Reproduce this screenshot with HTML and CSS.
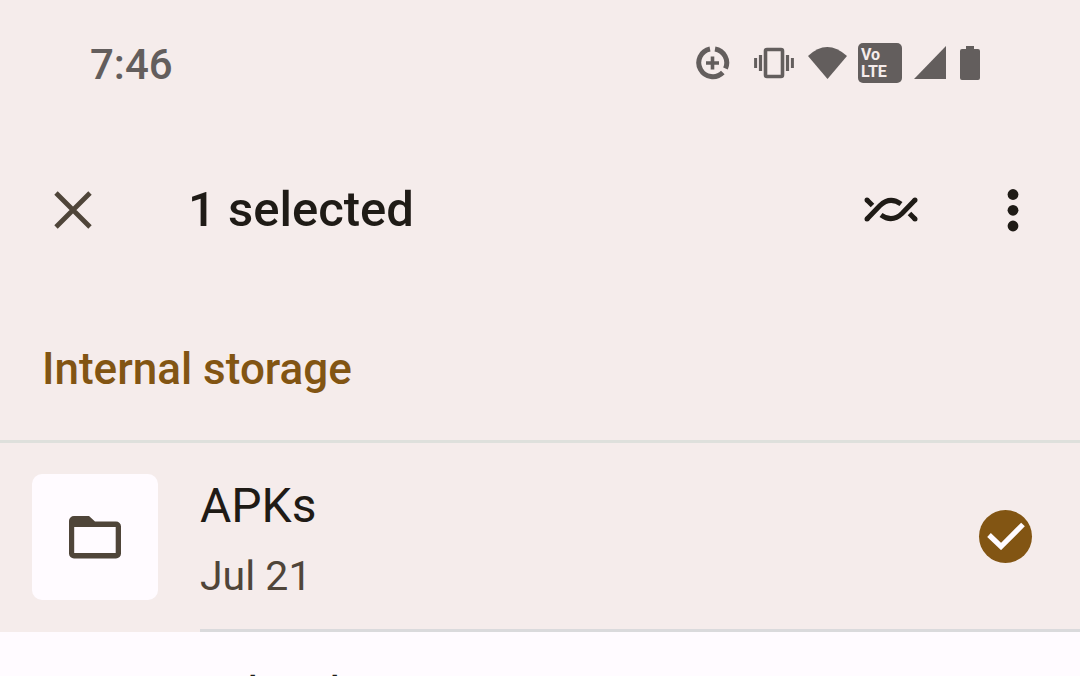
FILE: index.html
```html
<!DOCTYPE html>
<html lang="en">
<head>
<meta charset="utf-8">
<meta name="viewport" content="width=device-width, initial-scale=1">
<title>Files</title>
<link rel="stylesheet" href="styles.css">
</head>
<body>
<div class="screen">
  <div class="status-bar">
    <time class="clock">7:46</time>
    <div class="status-icons">
      <svg width="34" height="34" viewBox="0 0 34 34" fill="none" stroke="currentColor" aria-hidden="true">
        <path d="M19 3A14 14 0 0 1 29.500 22.500" stroke-width="5"/>
        <path d="M14 3A14 14 0 1 0 26.800 26.500" stroke-width="5"/>
        <path d="M16.500 10.500v13M10 17h13" stroke-width="3.600"/>
      </svg>
      <svg width="40" height="32" viewBox="0 0 40 32" fill="none" stroke="currentColor" aria-hidden="true">
        <rect x="11.500" y="2.500" width="17" height="27" rx="1.500" stroke-width="3.600"/>
        <path d="M6.500 8v16M33.500 8v16" stroke-width="3.200"/>
        <path d="M1.600 11v10M38.400 11v10" stroke-width="3"/>
      </svg>
      <svg width="40" height="34" viewBox="0 0 40 34" fill="currentColor" aria-hidden="true"><path d="M0 10Q19-8 39 10L19.500 33Z"/></svg>
      <span class="volte"><span>Vo</span><span>LTE</span></span>
      <svg width="34" height="34" viewBox="0 0 34 34" fill="currentColor" aria-hidden="true"><path d="M32 0v33H0Z"/></svg>
      <svg width="20" height="34" viewBox="0 0 20 34" fill="currentColor" aria-hidden="true"><path d="M6 0h8v3h4a2 2 0 0 1 2 2v27a2 2 0 0 1-2 2H2a2 2 0 0 1-2-2V5a2 2 0 0 1 2-2h4Z"/></svg>
    </div>
  </div>

  <header class="toolbar">
    <button class="icon-button close" type="button" aria-label="Clear selection">
      <svg width="40" height="40" viewBox="0 0 40 40" fill="none" stroke="currentColor" stroke-width="4.800" aria-hidden="true"><path d="M3 3l34 34M37 3L3 37"/></svg>
    </button>
    <h1 class="title">1 selected</h1>
    <div class="actions">
      <button class="icon-button" type="button" aria-label="Nearby Share">
        <svg width="54" height="26" viewBox="0 0 54 26" fill="none" stroke="currentColor" stroke-width="5" aria-hidden="true">
          <path d="M3 22L16 8.500Q26-1 37 7" />
          <path d="M51 3L38 16.500Q28 26 17 18"/>
          <path d="M3 3l5.500 5.500M45.500 16.500L51 22"/>
          <g fill="currentColor" stroke="none"><circle cx="3" cy="3" r="2.500"/><circle cx="3" cy="22" r="2.500"/><circle cx="51" cy="3" r="2.500"/><circle cx="51" cy="22" r="2.500"/></g>
        </svg>
      </button>
      <button class="icon-button" type="button" aria-label="More options">
        <svg width="12" height="44" viewBox="0 0 12 44" fill="currentColor" aria-hidden="true"><circle cx="6" cy="6.500" r="5.400"/><circle cx="6" cy="22.300" r="5.400"/><circle cx="6" cy="38" r="5.400"/></svg>
      </button>
    </div>
  </header>

  <nav class="breadcrumb" aria-label="Location"><a href="#">Internal storage</a></nav>

  <main class="file-list">
    <label class="file selected">
      <span class="thumb">
        <svg width="54" height="44" viewBox="0 0 54 44" fill="currentColor" fill-rule="evenodd" aria-hidden="true"><path d="M6 1h15l6 5.500h21a5 5 0 0 1 5 5v27a5 5 0 0 1-5 5H6a5 5 0 0 1-5-5V6a5 5 0 0 1 5-5ZM6.200 12v26h41.500V12Z"/></svg>
      </span>
      <span class="details">
        <span class="text"><span class="name">APKs</span><span class="date">Jul 21</span></span>
        <span class="check">
          <input type="checkbox" checked>
          <svg width="38" height="28" viewBox="0 0 38 28" fill="none" stroke="currentColor" stroke-width="5.200" aria-hidden="true"><path d="M2 13L14 24.500L36 2.500"/></svg>
        </span>
      </span>
    </label>
    <label class="file">
      <span class="thumb"></span>
      <span class="details"><span class="text"><span class="name">Adroid</span></span></span>
    </label>
  </main>
</div>
</body>
</html>
```
FILE: styles.css
```css
* { box-sizing: border-box; }

body {
  margin: 0;
  background: #fffbff;
  color: #1f1b16;
  font-family: Roboto, "Noto Sans", sans-serif;
}

.screen {
  height: 100vh;
  overflow: hidden;
  background: #f5eceb;
}

.status-bar {
  display: flex;
  align-items: center;
  justify-content: space-between;
  height: 126px;
  padding: 0 100px 0 90px;
  color: #635e5d;
}

.clock {
  padding-top: 3px;
  font-size: 42px;
  font-weight: 500;
  line-height: 48px;
}

.status-icons {
  display: flex;
  align-items: center;
}

.status-icons svg:nth-child(1) { margin-right: 24px; }
.status-icons svg:nth-child(2) { margin-right: 14px; }
.status-icons svg:nth-child(3) { margin-right: 10px; }

.volte {
  display: flex;
  flex-direction: column;
  justify-content: center;
  width: 44px;
  height: 40px;
  margin-right: 12px;
  padding: 0 3px;
  border-radius: 5px;
  background: #635e5d;
  color: #f5eceb;
  font-size: 16px;
  font-weight: 700;
  line-height: 17px;
}

.status-icons svg:nth-child(5) { margin-right: 12px; }

.toolbar {
  display: flex;
  align-items: center;
  height: 168px;
  padding: 0 30px 0 36px;
}

.icon-button {
  display: flex;
  align-items: center;
  justify-content: center;
  width: 74px;
  height: 74px;
  padding: 0;
  border: 0;
  background: none;
  color: inherit;
}

.close { color: #4f4539; }

.title {
  flex: 1;
  margin: 0;
  padding-left: 78px;
  font-size: 49px;
  font-weight: 500;
  line-height: 64px;
}

.actions {
  display: flex;
  gap: 48px;
}

.breadcrumb {
  height: 149px;
  padding: 43px 42px 0;
  border-bottom: 3px solid #dee0dc;
  font-size: 44px;
  font-weight: 500;
  line-height: 64px;
}

.breadcrumb a {
  color: #825513;
  text-decoration: none;
}

.file {
  display: flex;
  height: 189px;
  background: #fffbff;
}

.selected { background: #f5eceb; }

.thumb {
  display: flex;
  flex: none;
  align-items: center;
  justify-content: center;
  width: 126px;
  height: 126px;
  margin: 31px 42px 0 32px;
  border-radius: 10px;
  background: #fffbff;
  color: #4f4539;
}

.details {
  display: flex;
  flex: 1;
  align-items: center;
  justify-content: space-between;
  padding-right: 48px;
  border-bottom: 3px solid #dadadc;
}

.text {
  display: flex;
  flex-direction: column;
  align-self: flex-start;
  gap: 10px;
  padding-top: 31px;
}

.name {
  font-size: 48px;
  line-height: 64px;
}

.date {
  color: #4f4539;
  font-size: 41px;
  line-height: 56px;
}

.check {
  display: grid;
  place-items: center;
  color: #fffbff;
}

.check > * { grid-area: 1 / 1; }

.check input {
  appearance: none;
  width: 53px;
  height: 53px;
  margin: 0;
  border-radius: 50%;
  background: #825513;
}

.check svg { z-index: 1; }
```
